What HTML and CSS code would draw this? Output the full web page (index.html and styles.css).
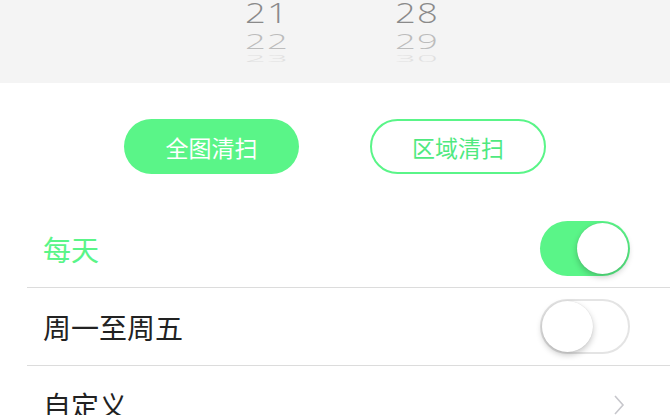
FILE: index.html
```html
<!DOCTYPE html>
<html lang="zh">
<head>
<meta charset="utf-8">
<link rel="stylesheet" href="styles.css">
</head>
<body>
<div class="picker">
  <div class="col">
    <div class="n n1">21</div>
    <div class="n n2">22</div>
    <div class="n n3">23</div>
  </div>
  <div class="col">
    <div class="n n1">28</div>
    <div class="n n2">29</div>
    <div class="n n3">30</div>
  </div>
</div>
<div class="modes">
  <div class="btn btn-fill">全图清扫</div>
  <div class="btn btn-line">区域清扫</div>
</div>
<div class="list">
  <div class="row">
    <span class="label active">每天</span>
    <div class="switch on"><span class="knob"></span></div>
  </div>
  <div class="row">
    <span class="label">周一至周五</span>
    <div class="switch off"><span class="knob"></span></div>
  </div>
  <div class="row">
    <span class="label">自定义</span>
    <svg class="chev" width="12" height="22" viewBox="0 0 12 22"><path d="M2 2 L10 11 L2 20" fill="none" stroke="#c7c7cc" stroke-width="1.6"/></svg>
  </div>
</div>
</body>
</html>
```
FILE: styles.css
```css
html, body {
  margin: 0;
  padding: 0;
  background: #fff;
  width: 670px;
  height: 415px;
  overflow: hidden;
  font-family: "Noto Sans CJK SC", "Noto Sans", sans-serif;
}
.picker {
  height: 83px;
  background: #f4f4f4;
  display: flex;
  padding-left: 237px;
  gap: 90px;
  box-sizing: border-box;
  overflow: hidden;
}
.col {
  width: 60px;
  display: flex;
  flex-direction: column;
  align-items: center;
}
.n {
  font-family: "Open Sans", "Liberation Sans", sans-serif;
  font-weight: 300;
  font-size: 28px;
  letter-spacing: 1px;
}
.n1 {
  color: #8a8a8a;
  line-height: 24px;
  height: 24px;
  transform: scaleX(1.3);
}
.n2 {
  color: #bcbcbc;
  line-height: 21px;
  height: 21px;
  margin-top: 7px;
  transform: scale(1.3, 0.75);
}
.n3 {
  color: #e0e0e0;
  line-height: 10px;
  height: 10px;
  margin-top: 1px;
  transform: scale(1.3, 0.35);
}
.modes {
  display: flex;
  justify-content: center;
  gap: 71px;
  padding-top: 36px;
}
.btn {
  width: 175px;
  height: 55px;
  box-sizing: border-box;
  border-radius: 28px;
  display: flex;
  align-items: center;
  justify-content: center;
  font-size: 23px;
}
.btn-fill {
  background: #5af588;
  color: #fff;
}
.btn-line {
  border: 2px solid #5af588;
  color: #4fe97f;
  width: 176px;
}
.list {
  margin-left: 27px;
  margin-top: 36px;
}
.row {
  height: 77px;
  border-bottom: 1px solid #dcdcdc;
  display: flex;
  align-items: center;
  justify-content: space-between;
  padding-left: 16px;
  padding-right: 40px;
}
.label {
  font-size: 28px;
  color: #222;
}
.label.active {
  color: #5af588;
}
.switch {
  width: 90px;
  height: 55px;
  border-radius: 28px;
  box-sizing: border-box;
  position: relative;
}
.switch.on {
  background: #5af588;
}
.switch.off {
  background: #fff;
  border: 2px solid #e4e4e4;
}
.knob {
  position: absolute;
  width: 51px;
  height: 51px;
  border-radius: 50%;
  background: #fff;
  box-shadow: 0 3px 6px rgba(0,0,0,0.22), 0 0 1px rgba(0,0,0,0.15);
}
.switch.on .knob {
  right: 2px;
  top: 2px;
}
.switch.off .knob {
  left: 0;
  top: 0;
}
.chev {
  margin-right: 5px;
}
```
